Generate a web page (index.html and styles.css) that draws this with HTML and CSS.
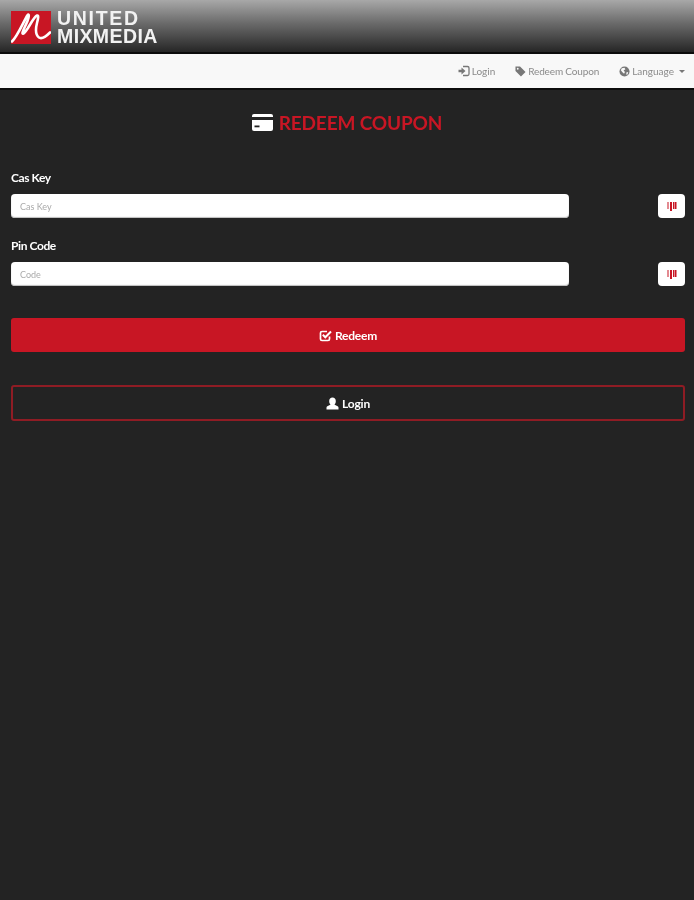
FILE: index.html
```html
<html>
  <head>
    <title>Redeem Coupon</title>
    <meta charset="UTF-8" />
    <link rel="stylesheet" href="styles.css">
  </head>
  <body>
    <header class="topbar">
      <div class="logo">
        <svg class="logo-mark" viewBox="0 0 40 33" width="40" height="33">
          <rect width="40" height="33" fill="#c81624" />
          <path d="M1 30.500 C6 26 12 12 16 5 C18 1.500 18.500 5 16.500 10 C14 16 11.500 20 11.500 22 C11.500 24 14 21.500 17 17 C20 12 23.500 5.500 26 4.500 C28 4 27 8 26 12 C24.500 18 24.500 24 28 26.500 C31 28.500 35 25.500 39 21.500" fill="none" stroke="#fff" stroke-width="2.600" stroke-linecap="round" />
        </svg>
        <div class="logo-text">
          <span class="logo-united">UNITED</span>
          <span class="logo-mix">MIXMEDIA</span>
        </div>
      </div>
    </header>
    <nav class="navbar">
      <a class="nav-link" href="#">
        <svg class="nav-icon" viewBox="0 0 12 12" width="12" height="12">
          <path d="M5 1.500 H9.500 Q11 1.500 11 3 V9 Q11 10.500 9.500 10.500 H5" fill="none" stroke="#777" stroke-width="1.300" />
          <path d="M0.500 4.700 H3.500 V2.500 L7.500 6 L3.500 9.500 V7.300 H0.500 Z" fill="#777" />
        </svg>
        Login
      </a>
      <a class="nav-link nav-link-tight" href="#">
        <svg class="nav-icon" viewBox="0 0 12 12" width="11" height="11">
          <path d="M0.500 0.500 H5.500 L11.500 6.500 L6.500 11.500 L0.500 5.500 Z M3 2 A1 1 0 1 0 3 4 A1 1 0 1 0 3 2 Z" fill="#777" fill-rule="evenodd" />
        </svg>
        Redeem Coupon
      </a>
      <a class="nav-link" href="#">
        <svg class="nav-icon" viewBox="0 0 12 12" width="11" height="11">
          <circle cx="6" cy="6" r="5.500" fill="#777" />
          <path d="M3 2.500 L6 1.800 L7 3.500 L5 5 L6.500 6.500 L5.500 8.500 L3.500 6.500 L2 4.500 Z M8 7 L10 6.500 L9.500 9 L8 9.500 Z" fill="#f8f8f8" />
        </svg>
        Language
        <span class="caret"></span>
      </a>
    </nav>
    <main class="content">
      <h1 class="page-title">
        <svg class="title-icon" viewBox="0 0 21 17" width="21" height="17">
          <rect width="21" height="17" rx="2" fill="#fff" />
          <rect y="3" width="21" height="3" fill="#232323" />
          <rect x="2.500" y="11.500" width="5" height="1.800" fill="#232323" />
        </svg>
        REDEEM COUPON
      </h1>
      <form class="coupon-form">
        <div class="form-group">
          <label class="form-label">Cas Key</label>
          <div class="input-row">
            <input class="form-input" type="text" placeholder="Cas Key" />
            <button class="scan-btn" type="button">
              <svg viewBox="0 0 10 9" width="10" height="9">
                <path d="M0.500 0 H1.500 V7 H0.500 Z M3 0 H5 V9 H3 Z M6 0 H7 V7 H6 Z M7.500 0 H9.500 V7 H7.500 Z" fill="#c81624" />
              </svg>
            </button>
          </div>
        </div>
        <div class="form-group">
          <label class="form-label">Pin Code</label>
          <div class="input-row">
            <input class="form-input" type="text" placeholder="Code" />
            <button class="scan-btn" type="button">
              <svg viewBox="0 0 10 9" width="10" height="9">
                <path d="M0.500 0 H1.500 V7 H0.500 Z M3 0 H5 V9 H3 Z M6 0 H7 V7 H6 Z M7.500 0 H9.500 V7 H7.500 Z" fill="#c81624" />
              </svg>
            </button>
          </div>
        </div>
        <button class="btn btn-redeem" type="button">
          <svg viewBox="0 0 13 13" width="13" height="13">
            <path d="M10.500 7.500 V10 Q10.500 11.500 9 11.500 H3 Q1.500 11.500 1.500 10 V4 Q1.500 2.500 3 2.500 H8" fill="none" stroke="#fff" stroke-width="1.700" />
            <path d="M3.800 5.800 L6.300 8.300 L12 2.500" fill="none" stroke="#fff" stroke-width="2" />
          </svg>
          Redeem
        </button>
        <button class="btn btn-login" type="button">
          <svg viewBox="0 0 13 13" width="13" height="13">
            <path d="M0.500 12.500 V10.500 C0.500 9 3 8.500 4.500 7.700 C3.500 6.500 3.200 5.500 3.200 4 C3.200 1.700 4.500 0.500 6.500 0.500 C8.500 0.500 9.800 1.700 9.800 4 C9.800 5.500 9.500 6.500 8.500 7.700 C10 8.500 12.500 9 12.500 10.500 V12.500 Z" fill="#fff" />
          </svg>
          Login
        </button>
      </form>
    </main>
  </body>
</html>
```

FILE: styles.css
```css
html,
body {
  margin: 0;
  padding: 0;
  height: 100%;
  background: #232323;
  font-family: "Lato", "Noto Sans", sans-serif;
}

/* the whole page is a little soft, like the upscaled original */
.topbar,
.navbar,
.content {
  filter: blur(0.4px);
}

.topbar {
  height: 52px;
  box-sizing: border-box;
  padding: 11px 0 0 11px;
  background: linear-gradient(to bottom, #a8a8a8 0%, #6a6a6a 45%, #262626 100%);
}

.logo {
  display: flex;
  gap: 6px;
}

.logo-mark {
  display: block;
}

.logo-text {
  display: flex;
  flex-direction: column;
  margin-top: -2px;
  font-family: "Liberation Sans", sans-serif;
  font-weight: bold;
  color: #f2f2f2;
  line-height: 18px;
  font-size: 19.5px;
}

.logo-united {
  letter-spacing: 1.7px;
}

.logo-mix {
  letter-spacing: 0.4px;
}

.navbar {
  height: 34px;
  display: flex;
  justify-content: flex-end;
  align-items: center;
  gap: 20px;
  padding-right: 9px;
  background: #f8f8f8;
  border-top: 2px solid #0c0c0c;
  border-bottom: 2px solid #0c0c0c;
}

.nav-link {
  display: flex;
  align-items: center;
  gap: 2px;
  color: #8a8a8a;
  font-size: 10px;
  text-decoration: none;
}

.nav-link-tight {
  letter-spacing: -0.15px;
}

.caret {
  width: 0;
  height: 0;
  margin-left: 3px;
  border-top: 3px solid #777;
  border-left: 3px solid transparent;
  border-right: 3px solid transparent;
}

.content {
  padding: 0 9px 0 11px;
}

.page-title {
  display: flex;
  justify-content: center;
  align-items: center;
  gap: 6px;
  margin: 0;
  padding-top: 19px;
  padding-right: 2px;
  height: 26px;
  color: #c81624;
  font-size: 19px;
  font-weight: bold;
  letter-spacing: -0.15px;
}

.form-group {
  margin-bottom: 20px;
}

.coupon-form {
  padding-top: 35px;
}

.form-label {
  display: block;
  color: #fff;
  font-size: 12px;
  font-weight: bold;
  letter-spacing: -0.4px;
  line-height: 15px;
  margin-bottom: 9px;
}

.input-row {
  display: flex;
  justify-content: space-between;
}

.form-input {
  width: 558px;
  height: 24px;
  box-sizing: border-box;
  padding: 0 9px;
  border: 0;
  border-radius: 4px;
  background: #fff;
  box-shadow: inset 0 -1px 1px #bbb;
  font-family: inherit;
  font-size: 9px;
}

.form-input::placeholder {
  color: #aaa;
}

.scan-btn {
  width: 27px;
  height: 24px;
  padding: 0;
  border: 0;
  border-radius: 4px;
  background: #fff;
  display: flex;
  align-items: center;
  justify-content: center;
}

.btn {
  display: flex;
  width: 100%;
  align-items: center;
  justify-content: center;
  gap: 3px;
  box-sizing: border-box;
  border-radius: 3px;
  color: #fff;
  font-family: inherit;
  font-size: 12px;
  font-weight: bold;
  letter-spacing: -0.2px;
}

.btn-redeem {
  height: 34px;
  margin-top: 32px;
  border: 0;
  background: #c81624;
}

.btn-login {
  height: 36px;
  margin-top: 33px;
  background: transparent;
  border: 2px solid #8f1c24;
}
```
